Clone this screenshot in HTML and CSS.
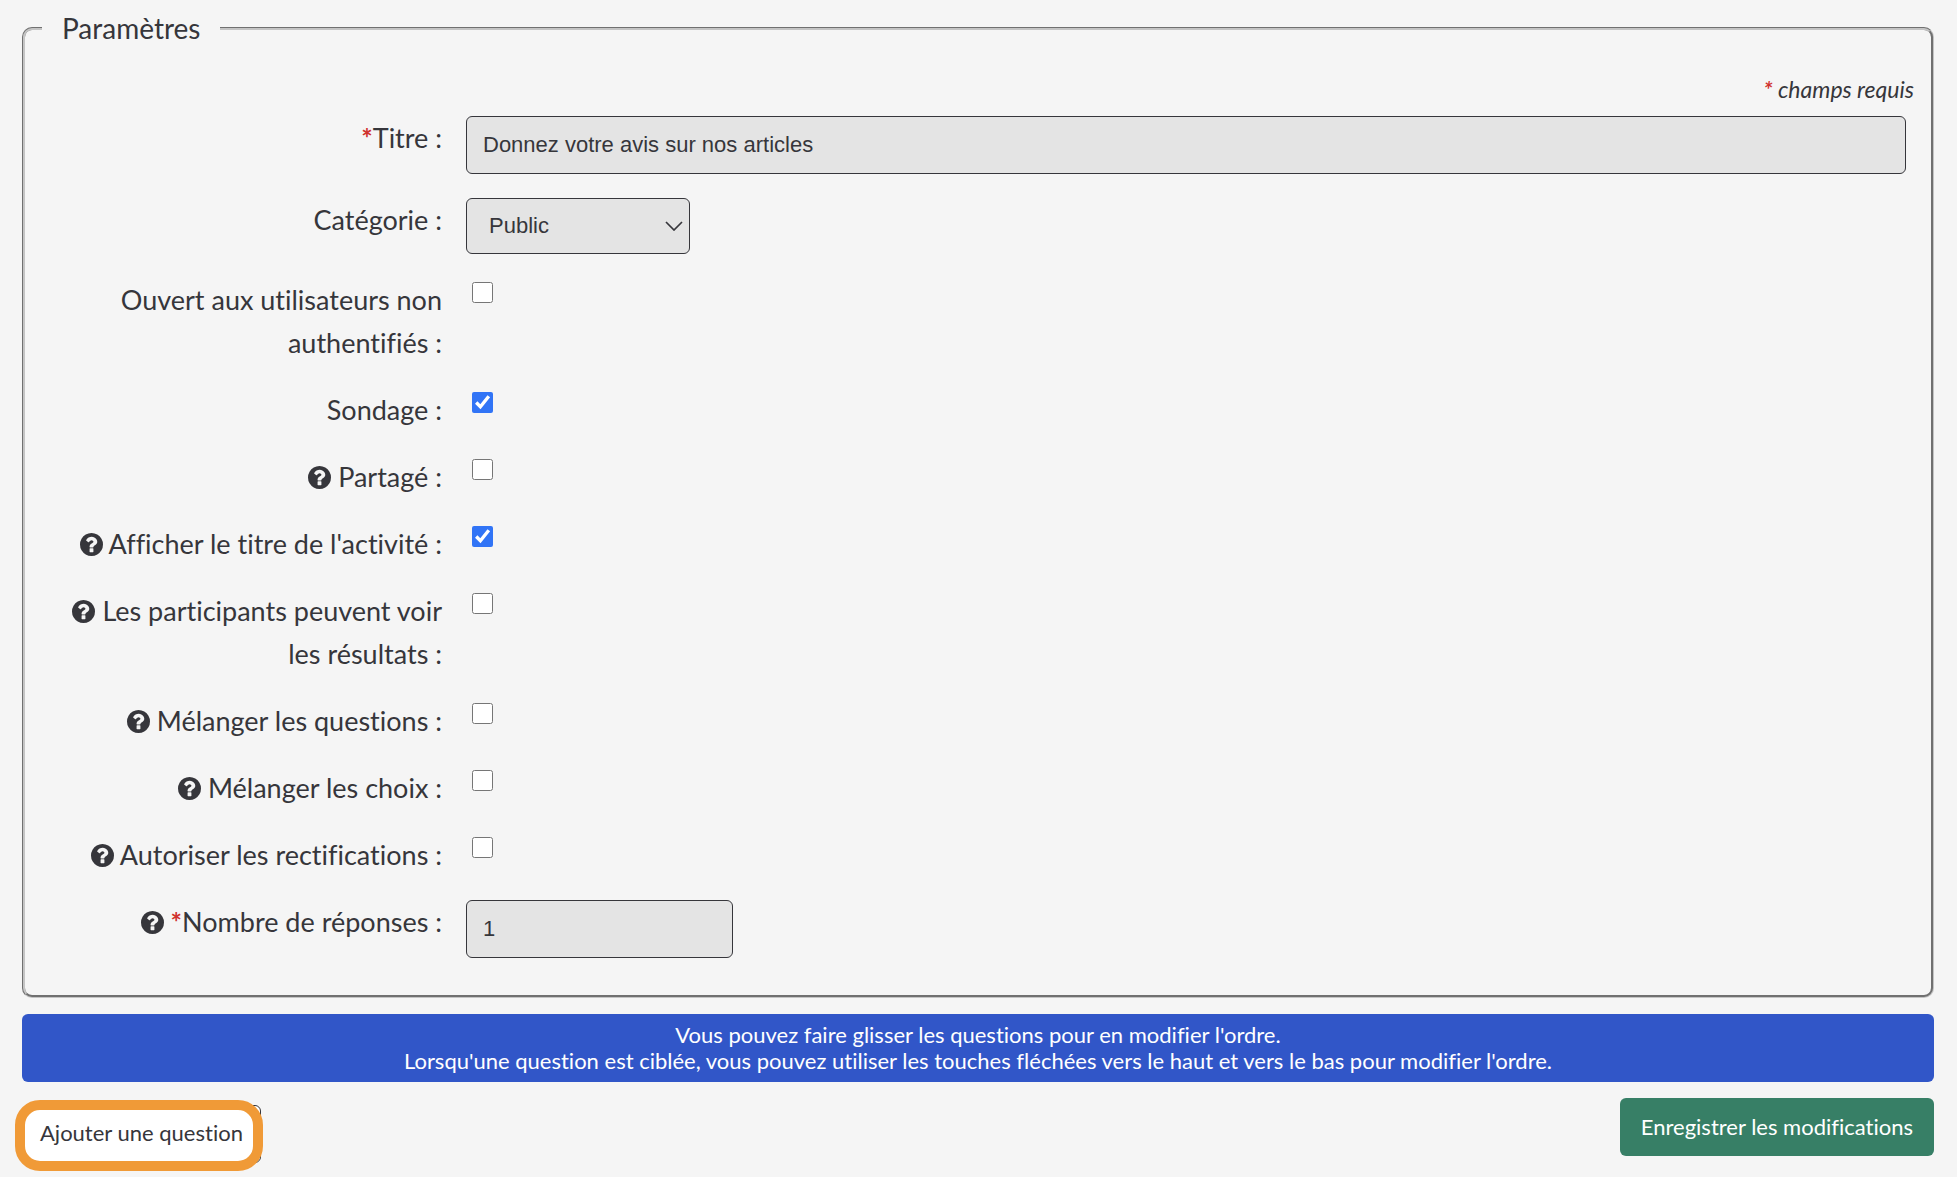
FILE: index.html
```
<!DOCTYPE html>
<html lang="fr">
<head>
    <meta charset="UTF-8">
    <meta name="viewport" content="width=device-width, initial-scale=1.0">
    <title>Paramètres</title>
    <link rel="stylesheet" href="styles.css">
</head>
<body>
    <svg class="sprite" aria-hidden="true">
        <symbol id="help" viewBox="128 128 1536 1536">
            <path d="M1024 1376v-192q0-14-9-23t-23-9h-192q-14 0-23 9t-9 23v192q0 14 9 23t23 9h192q14 0 23-9t9-23zm256-672q0-88-55.5-163t-138.5-116-170-41q-243 0-371 213-15 24 8 42l132 100q7 6 19 6 16 0 25-12 53-68 86-92 34-24 86-24 48 0 85.5 26t37.5 59q0 38-20 61t-68 45q-63 28-115.5 86.5t-52.5 125.5v36q0 14 9 23t23 9h192q14 0 23-9t9-23q0-19 21.5-49.5t54.5-49.5q32-18 49-28.5t46-35 44.5-48 28-60.5 12.5-81zm384 192q0 209-103 385.5t-279.5 279.5-385.5 103-385.5-103-279.5-279.5-103-385.5 103-385.5 279.5-279.5 385.5-103 385.5 103 279.5 279.5 103 385.5z"/>
        </symbol>
    </svg>

    <form>
        <fieldset>
            <legend>Paramètres</legend>
            <p class="required-note"><span class="star">*</span> champs requis</p>

            <div class="row">
                <label for="titre"><span class="star">*</span>Titre :</label>
                <input type="text" class="field" id="titre" value="Donnez votre avis sur nos articles">
            </div>
            <div class="row">
                <label for="categorie">Catégorie :</label>
                <div class="select">
                    <select class="field" id="categorie">
                        <option>Public</option>
                    </select>
                    <svg class="chevron" viewBox="0 0 18 10"><path d="M1 1l8 8 8-8"/></svg>
                </div>
            </div>
            <div class="row">
                <label for="ouvert">Ouvert aux utilisateurs non authentifiés :</label>
                <input type="checkbox" id="ouvert">
            </div>
            <div class="row">
                <label for="sondage">Sondage :</label>
                <input type="checkbox" id="sondage" checked>
            </div>
            <div class="row">
                <label for="partage"><svg class="help"><use href="#help"/></svg> Partagé :</label>
                <input type="checkbox" id="partage">
            </div>
            <div class="row">
                <label for="afficher"><svg class="help"><use href="#help"/></svg> Afficher le titre de l'activité :</label>
                <input type="checkbox" id="afficher" checked>
            </div>
            <div class="row">
                <label for="resultats"><svg class="help"><use href="#help"/></svg> Les participants peuvent voir les résultats :</label>
                <input type="checkbox" id="resultats">
            </div>
            <div class="row">
                <label for="questions"><svg class="help"><use href="#help"/></svg> Mélanger les questions :</label>
                <input type="checkbox" id="questions">
            </div>
            <div class="row">
                <label for="choix"><svg class="help"><use href="#help"/></svg> Mélanger les choix :</label>
                <input type="checkbox" id="choix">
            </div>
            <div class="row">
                <label for="rectifications"><svg class="help"><use href="#help"/></svg> Autoriser les rectifications :</label>
                <input type="checkbox" id="rectifications">
            </div>
            <div class="row">
                <label for="reponses"><svg class="help"><use href="#help"/></svg> <span class="star">*</span>Nombre de réponses :</label>
                <input type="text" class="field short" id="reponses" value="1">
            </div>
        </fieldset>

        <div class="info">
            Vous pouvez faire glisser les questions pour en modifier l'ordre.<br>
            Lorsqu'une question est ciblée, vous pouvez utiliser les touches fléchées vers le haut et vers le bas pour modifier l'ordre.
        </div>

        <div class="actions">
            <div class="add">
                <button type="button" class="btn-add">Ajouter une question</button>
                <span class="highlight"></span>
            </div>
            <button type="button" class="btn-save">Enregistrer les modifications</button>
        </div>
    </form>
</body>
</html>
```

FILE: styles.css
```
* {
    box-sizing: border-box;
}

body {
    margin: 0;
    padding: 7px 23px 14px 22px;
    background-color: #f5f5f5;
    color: #36363b;
    font-family: Lato, sans-serif;
    font-size: 27px;
    font-variant-ligatures: no-common-ligatures;
    line-height: 43px;
}

.sprite {
    display: none;
}

fieldset {
    margin: 0;
    padding: 18px 17px 37px;
    border: 3px groove #c4c4c4;
    border-radius: 10px;
}

legend {
    padding: 0 20px;
    font-size: 28px;
}

.required-note {
    margin: 0;
    padding-bottom: 5px;
    text-align: right;
    font-size: 23px;
    font-style: italic;
}

.star {
    color: #d0312d;
    font-weight: bold;
}

.row {
    display: grid;
    grid-template-columns: 400px 1fr;
    column-gap: 24px;
    align-items: start;
    justify-items: start;
    margin-right: 8px;
}

.row + .row {
    margin-top: 24px;
}

.row label {
    justify-self: end;
    padding-left: 20px;
    text-align: right;
}

.help {
    width: 23px;
    height: 23px;
    fill: currentColor;
    vertical-align: -2px;
}

.field {
    width: 100%;
    height: 58px;
    padding: 0 16px;
    border: 1px solid #36363b;
    border-radius: 6px;
    background-color: #e4e4e4;
    color: #36363b;
    font-family: "Liberation Sans", Arial, sans-serif;
    font-size: 22px;
}

.short {
    width: 267px;
}

.select {
    position: relative;
    width: 224px;
}

select.field {
    display: block;
    height: 56px;
    padding: 0 22px 2px;
    appearance: none;
}

.chevron {
    position: absolute;
    right: 7px;
    top: 23px;
    width: 18px;
    height: 10px;
    fill: none;
    stroke: #36363b;
    stroke-width: 1.7;
    pointer-events: none;
}

input[type="checkbox"] {
    width: 21px;
    height: 21px;
    margin: 4px 6px;
    accent-color: #3174f6;
}

.info {
    margin-top: 16px;
    padding: 8px;
    border-radius: 6px;
    background-color: #3156c8;
    color: #fff;
    text-align: center;
    font-size: 22px;
    line-height: 26px;
}

.actions {
    display: flex;
    justify-content: space-between;
    align-items: flex-start;
    margin-top: 16px;
}

button {
    height: 58px;
    border: none;
    border-radius: 6px;
    font-family: Lato, sans-serif;
    font-size: 22px;
    font-variant-ligatures: no-common-ligatures;
    cursor: pointer;
}

.add {
    position: relative;
    margin-top: 7px;
}

.btn-add {
    display: block;
    padding: 0 17px 4px;
    border: 1px solid #36363b;
    background-color: #fff;
    color: #36363b;
}

/* orange frame around the add button */
.highlight {
    position: absolute;
    top: -5px;
    left: -7px;
    right: -2px;
    height: 71px;
    border: 10px solid #f09a37;
    border-radius: 25px;
    pointer-events: none;
}

.btn-save {
    padding: 0 21px 2px;
    background-color: #377f66;
    color: #fff;
}
```
